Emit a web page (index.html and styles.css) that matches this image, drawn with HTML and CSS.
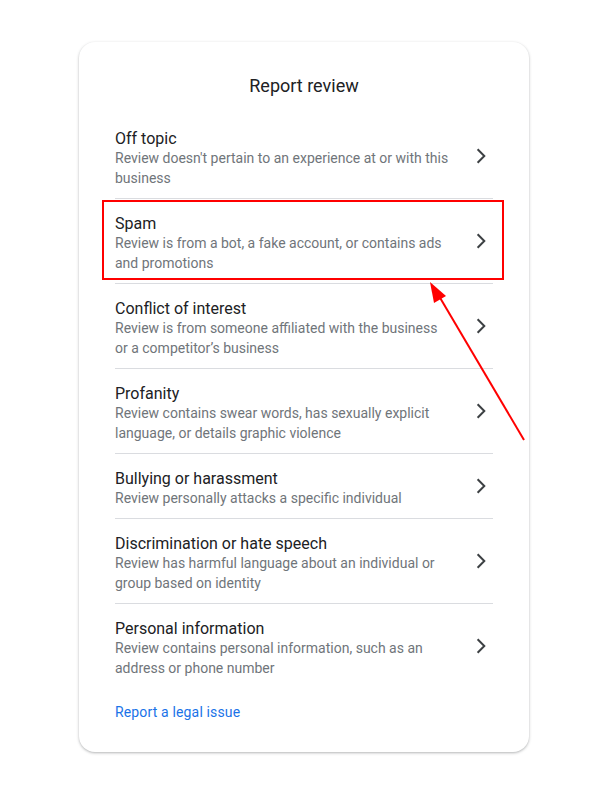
FILE: index.html
```html
<!DOCTYPE html>
<html>
<head>
<meta charset="utf-8">
<link rel="stylesheet" href="styles.css">
</head>
<body>
<div class="card">
  <h1 class="title">Report review</h1>
  <ul class="list">
    <li class="item">
      <div class="text">
        <div class="name">Off topic</div>
        <div class="desc">Review doesn't pertain to an experience at or with this business</div>
      </div>
      <svg class="chev" viewBox="0 0 24 24" width="24" height="24"><path d="M8.6 5.3L15.3 12L8.6 18.7"/></svg>
    </li>
    <li class="item">
      <div class="text">
        <div class="name">Spam</div>
        <div class="desc">Review is from a bot, a fake account, or contains ads and promotions</div>
      </div>
      <svg class="chev" viewBox="0 0 24 24" width="24" height="24"><path d="M8.6 5.3L15.3 12L8.6 18.7"/></svg>
    </li>
    <li class="item">
      <div class="text">
        <div class="name">Conflict of interest</div>
        <div class="desc">Review is from someone affiliated with the business or a competitor’s business</div>
      </div>
      <svg class="chev" viewBox="0 0 24 24" width="24" height="24"><path d="M8.6 5.3L15.3 12L8.6 18.7"/></svg>
    </li>
    <li class="item">
      <div class="text">
        <div class="name">Profanity</div>
        <div class="desc">Review contains swear words, has sexually explicit language, or details graphic violence</div>
      </div>
      <svg class="chev" viewBox="0 0 24 24" width="24" height="24"><path d="M8.6 5.3L15.3 12L8.6 18.7"/></svg>
    </li>
    <li class="item">
      <div class="text">
        <div class="name">Bullying or harassment</div>
        <div class="desc">Review personally attacks a specific individual</div>
      </div>
      <svg class="chev" viewBox="0 0 24 24" width="24" height="24"><path d="M8.6 5.3L15.3 12L8.6 18.7"/></svg>
    </li>
    <li class="item">
      <div class="text">
        <div class="name">Discrimination or hate speech</div>
        <div class="desc">Review has harmful language about an individual or group based on identity</div>
      </div>
      <svg class="chev" viewBox="0 0 24 24" width="24" height="24"><path d="M8.6 5.3L15.3 12L8.6 18.7"/></svg>
    </li>
    <li class="item">
      <div class="text">
        <div class="name">Personal information</div>
        <div class="desc">Review contains personal information, such as an address or phone number</div>
      </div>
      <svg class="chev" viewBox="0 0 24 24" width="24" height="24"><path d="M8.6 5.3L15.3 12L8.6 18.7"/></svg>
    </li>
  </ul>
  <a class="legal" href="#">Report a legal issue</a>
  <div class="highlight"></div>
</div>
<svg class="arrow" width="609" height="798" viewBox="0 0 609 798">
  <line x1="524" y1="440" x2="439" y2="296" stroke="#f00" stroke-width="2"/>
  <polygon points="430,282 446,296 434,303" fill="#f00"/>
</svg>
</body>
</html>
```
FILE: styles.css
```css
html, body {
  margin: 0;
  padding: 0;
  background: #fff;
}
body {
  font-family: Roboto, "Liberation Sans", sans-serif;
  position: relative;
  width: 609px;
  height: 798px;
  padding-top: 42px;
  box-sizing: border-box;
}
.card {
  position: relative;
  margin-left: 79px;
  width: 450px;
  box-sizing: border-box;
  padding: 32px 36px 30px;
  background: #fff;
  border-radius: 16px;
  box-shadow: 0 1px 3px rgba(60,64,67,0.3), 0 1px 2px rgba(60,64,67,0.1);
}
.title {
  margin: 0 0 16px;
  font-size: 18px;
  line-height: 24px;
  font-weight: 400;
  color: #202124;
  text-align: center;
}
.list {
  list-style: none;
  margin: 0;
  padding: 0;
}
.item {
  display: flex;
  align-items: center;
  padding: 14px 0 10px;
  border-bottom: 1px solid #dadce0;
}
.item:last-child {
  border-bottom: none;
}
.text {
  flex: 1;
  padding-right: 17px;
}
.name {
  font-size: 16px;
  line-height: 20px;
  padding-top: 1px;
  margin-bottom: -1px;
  color: #202124;
}
.desc {
  font-size: 14px;
  line-height: 20px;
  color: #70757a;
}
.chev {
  flex: none;
  fill: none;
  stroke: #3c4043;
  stroke-width: 2;
  margin-top: -4px;
}
.legal {
  display: block;
  margin-top: 14px;
  font-size: 14px;
  line-height: 20px;
  letter-spacing: 0.15px;
  color: #1a73e8;
  text-decoration: none;
}
.highlight {
  position: absolute;
  left: 23px;
  top: 158px;
  width: 402px;
  height: 80px;
  box-sizing: border-box;
  border: 2px solid #f00;
}
.arrow {
  position: absolute;
  left: 0;
  top: 0;
  pointer-events: none;
}
```
